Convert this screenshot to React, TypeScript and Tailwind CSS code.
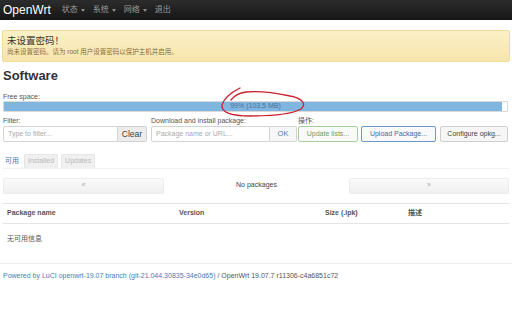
import React from "react";

const F = { fontFamily: '"Liberation Sans", "Noto Sans CJK SC", Arial, sans-serif' };

function Caret() {
  return <span className="ml-[3px] inline-block border-x-[2.5px] border-t-[3px] border-x-transparent border-t-[#8a8a8a] align-middle" />;
}

export default function App() {
  return (
    <div className="relative h-[310px] w-[512px] overflow-hidden bg-white text-[#333]" style={F}>
      {/* header */}
      <div className="flex h-[20px] items-center bg-gradient-to-b from-[#2c2c2c] to-[#161616] px-[3px]">
        <span className="text-[12px] leading-none text-white">OpenWrt</span>
        <div className="ml-[11px] flex items-center gap-[8px] text-[8px] text-[#9a9a9a]">
          <span className="flex items-center">状态<Caret /></span>
          <span className="flex items-center">系统<Caret /></span>
          <span className="flex items-center">网络<Caret /></span>
          <span>退出</span>
        </div>
      </div>

      {/* alert */}
      <div className="mx-[2px] mt-[10px] h-[32px] rounded-[2px] border border-[#eedc9a] bg-gradient-to-b from-[#fbf0c6] to-[#f6e5ac] px-[4px] pt-[4px]">
        <div className="text-[9.5px] leading-[12px] text-[#3b3526]">未设置密码！</div>
        <div className="text-[6.5px] leading-[10px] text-[#8a6d3b]">尚未设置密码。请为 root 用户设置密码以保护主机并启用。</div>
      </div>

      <div className="px-[3px]">
        <h2 className="mt-[6px] text-[13px] font-bold leading-[16px] text-[#333]">Software</h2>

        <div className="mt-[8px] text-[7px] leading-[9px] text-[#555]">Free space:</div>
        <div className="relative h-[11px] w-[505px] rounded-[1px] border border-[#d9d9d9] bg-white">
          <div className="h-full w-[498px] bg-[#7fb5df]" />
          <div className="absolute inset-0 flex items-center justify-center text-[7px] text-[#4d7399]">99% (103.5 MB)</div>
        </div>

        {/* controls */}
        <div className="mt-[4px] flex">
          <div className="flex flex-col">
            <div className="text-[7px] leading-[9px] text-[#555]">Filter:</div>
            <div className="mt-[1px] flex h-[16px]">
              <div className="flex w-[115px] items-center rounded-l-[2px] border border-[#d4d4d4] px-[4px] text-[7px] text-[#aaa]">Type to filter...</div>
              <div className="flex w-[29px] items-center justify-center rounded-r-[2px] border border-l-0 border-[#cfcfcf] bg-[#ececec] text-[8.5px] text-[#444]">Clear</div>
            </div>
          </div>
          <div className="ml-[4px] flex flex-col">
            <div className="text-[7px] leading-[9px] text-[#555]">Download and install package:</div>
            <div className="mt-[1px] flex h-[16px]">
              <div className="flex w-[119px] items-center rounded-l-[2px] border border-[#d4d4d4] px-[4px] text-[7px] text-[#aaa]">Package name or URL...</div>
              <div className="flex w-[27px] items-center justify-center rounded-r-[2px] border border-l-0 border-[#d4d4d4] bg-[#f7f7f7] text-[7.5px] text-[#4a7fb5]">OK</div>
            </div>
          </div>
          <div className="ml-[1px] flex flex-col">
            <div className="text-[7px] leading-[9px] text-[#555]">操作:</div>
            <div className="mt-[1px] flex h-[16px]">
              <div className="flex w-[60px] items-center justify-center rounded-[2px] border border-[#a6d19c] bg-[#fafafa] text-[7px] text-[#6a9e5f]">Update lists...</div>
              <div className="ml-[3px] flex w-[75px] items-center justify-center rounded-[2px] border border-[#6b98c6] bg-[#f9f9f9] text-[7px] text-[#3b6ea5]">Upload Package...</div>
              <div className="ml-[4px] flex w-[68px] items-center justify-center rounded-[2px] border border-[#cfcfcf] bg-[#f6f6f6] text-[7px] text-[#444]">Configure opkg...</div>
            </div>
          </div>
        </div>

        {/* tabs */}
        <div className="mt-[12px] flex items-center gap-[3px] border-b border-[#f0f0f0] text-[7px]">
          <span className="px-[2px] text-[#3a79b8]">可用</span>
          <span className="rounded-t-[2px] border border-b-0 border-[#e6e6e6] bg-[#f0f0f0] px-[3px] py-[1px] text-[#b9b9b9]">Installed</span>
          <span className="rounded-t-[2px] border border-b-0 border-[#e6e6e6] bg-[#f0f0f0] px-[3px] py-[1px] text-[#b9b9b9]">Updates</span>
        </div>

        {/* pager */}
        <div className="mt-[9px] flex h-[16px] items-center">
          <div className="flex h-full w-[161px] items-center justify-center rounded-[2px] border border-[#ececec] bg-gradient-to-b from-[#fafafa] to-[#f0f0f0] text-[7px] text-[#aaa]">«</div>
          <div className="flex-1 text-center text-[7px] text-[#444]">No packages</div>
          <div className="flex h-full w-[160px] items-center justify-center rounded-[2px] border border-[#ececec] bg-gradient-to-b from-[#fafafa] to-[#f0f0f0] text-[7px] text-[#aaa]">»</div>
        </div>

        {/* table */}
        <div className="mt-[9px] flex h-[21px] items-center border-y border-[#e5e5e5] text-[7px] font-bold text-[#555]">
          <span className="w-[176px] pl-[4px]">Package name</span>
          <span className="w-[146px]">Version</span>
          <span className="w-[83px]">Size (.ipk)</span>
          <span>描述</span>
        </div>
        <div className="mt-[10px] pl-[4px] text-[7px] leading-[9px] text-[#555]">无可用信息</div>
      </div>

      <div className="mt-[20px] border-t border-[#eeeeee]" />
      <div className="mt-[7px] px-[3px] text-[7px] leading-[9px] text-[#555]">
        <span className="text-[#4a7db3]">Powered by LuCI openwrt-19.07 branch (git-21.044.30835-34e0d65)</span> / OpenWrt 19.07.7 r11306-c4a6851c72
      </div>

      {/* red annotation scribble */}
      <svg className="pointer-events-none absolute left-0 top-0" width="512" height="310" viewBox="0 0 512 310">
        <path
          d="M240 88 C 232 92, 224 98, 222 105 C 221 112, 230 116, 250 116 C 270 116, 292 114, 301 109 C 307 104, 302 98, 290 96 C 276 93, 258 91, 246 92 C 238 93, 234 96, 231 100"
          fill="none"
          stroke="#cc1f2b"
          strokeWidth="1.3"
          strokeLinecap="round"
        />
      </svg>
    </div>
  );
}
